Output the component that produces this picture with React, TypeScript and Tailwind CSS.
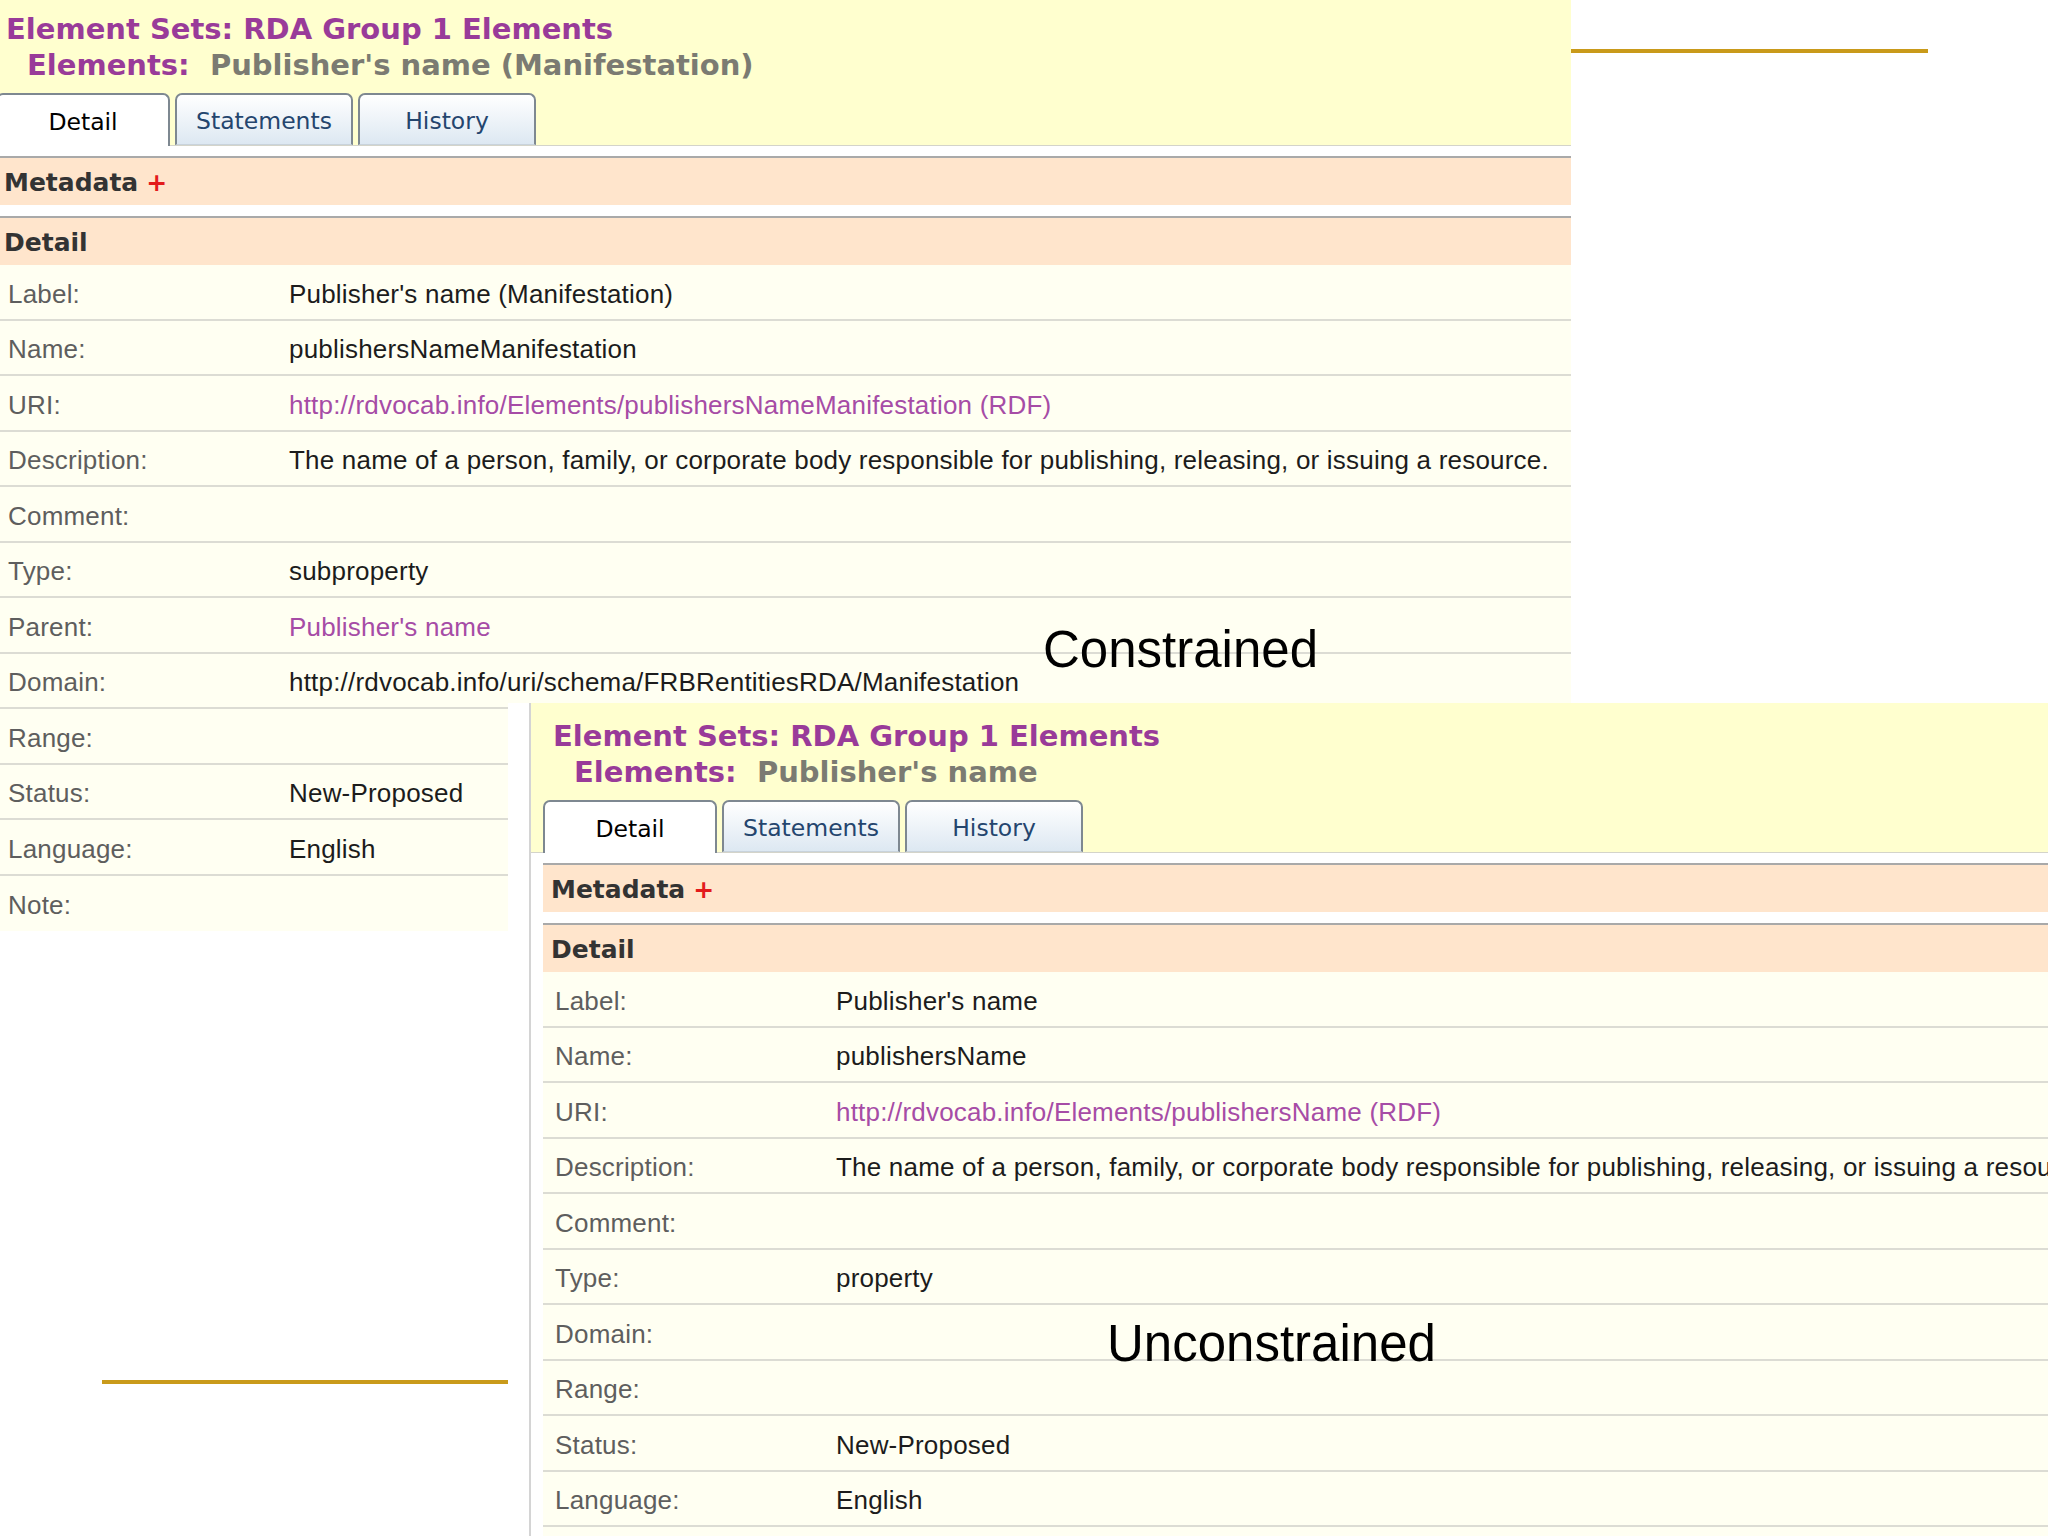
import React from 'react';

type Row = { label: string; value?: string; link?: boolean };

const constrainedRows: Row[] = [
  { label: 'Label:', value: "Publisher's name (Manifestation)" },
  { label: 'Name:', value: 'publishersNameManifestation' },
  { label: 'URI:', value: 'http://rdvocab.info/Elements/publishersNameManifestation (RDF)', link: true },
  { label: 'Description:', value: 'The name of a person, family, or corporate body responsible for publishing, releasing, or issuing a resource.' },
  { label: 'Comment:' },
  { label: 'Type:', value: 'subproperty' },
  { label: 'Parent:', value: "Publisher's name", link: true },
  { label: 'Domain:', value: 'http://rdvocab.info/uri/schema/FRBRentitiesRDA/Manifestation' },
  { label: 'Range:' },
  { label: 'Status:', value: 'New-Proposed' },
  { label: 'Language:', value: 'English' },
  { label: 'Note:' },
];

const unconstrainedRows: Row[] = [
  { label: 'Label:', value: "Publisher's name" },
  { label: 'Name:', value: 'publishersName' },
  { label: 'URI:', value: 'http://rdvocab.info/Elements/publishersName (RDF)', link: true },
  { label: 'Description:', value: 'The name of a person, family, or corporate body responsible for publishing, releasing, or issuing a resource.' },
  { label: 'Comment:' },
  { label: 'Type:', value: 'property' },
  { label: 'Domain:' },
  { label: 'Range:' },
  { label: 'Status:', value: 'New-Proposed' },
  { label: 'Language:', value: 'English' },
  { label: 'Note:' },
];

const Tab = ({ label, active }: { label: string; active?: boolean }) => (
  <div
    className={
      active
        ? 'w-[174px] h-[53px] -mb-px pt-1 flex items-center justify-center rounded-t-[7px] border-2 border-b-0 border-[#7e8891] bg-white text-black'
        : 'h-[52px] w-[178px] pt-1 flex items-center justify-center rounded-t-[7px] border-2 border-b border-[#7e8891] border-b-[#c9d3dc] bg-gradient-to-b from-white to-[#dde8f2] text-[#24456e]'
    }
  >
    {label}
  </div>
);

const Bar = ({ children }: { children: React.ReactNode }) => (
  <div className="h-[49px] pt-[3px] border-t-2 border-[#a9a9a9] bg-[#ffe5cc] flex items-center pl-2 font-['DejaVu_Sans',sans-serif] font-bold text-[25px] text-[#333333]">
    {children}
  </div>
);

const ElementPanel = ({ name, rows, pad }: { name: string; rows: Row[]; pad: string }) => (
  <div className="flex flex-col">
    <div className={`bg-[#ffffcf] border-b border-[#d4d4ca] pt-[15px] ${pad}`}>
      <div className="font-['DejaVu_Sans',sans-serif] font-bold text-[29px] leading-[36px] whitespace-nowrap">
        <div className="pl-[10px] text-[#993b99]">Element Sets: RDA Group 1 Elements</div>
        <div className="pl-[31px] text-[#993b99]">
          Elements:&nbsp; <span className="text-[#7b7b72]">{name}</span>
        </div>
      </div>
      <div className="mt-[10px] flex items-end gap-[5px] font-['DejaVu_Sans',sans-serif] text-[23.5px]">
        <Tab label="Detail" active />
        <Tab label="Statements" />
        <Tab label="History" />
      </div>
    </div>
    <div className={`bg-white pt-[10px] ${pad}`}>
      <Bar>
        Metadata <span className="ml-2 text-[#e31b1b]">+</span>
      </Bar>
      <div className="h-[11px]" />
      <Bar>Detail</Bar>
      <div className="font-['Liberation_Sans',Arial,sans-serif] text-[26px] tracking-[0.2px] whitespace-nowrap">
        {rows.map((r, i) => (
          <div
            key={r.label}
            className={
              i === rows.length - 1
                ? 'h-[55.5px] pt-[5px] flex items-center pl-3 bg-[#fffff2]'
                : 'h-[55.5px] pt-[5px] flex items-center pl-3 bg-[#fffff2] border-b-2 border-[#dcdcd4]'
            }
          >
            <div className="w-[281px] shrink-0 text-[#5e5e5e]">{r.label}</div>
            <div className={r.link ? 'text-[#a64ca6]' : 'text-[#1c1c1c]'}>{r.value}</div>
          </div>
        ))}
      </div>
    </div>
  </div>
);

export default function App() {
  return (
    <div className="relative w-[2048px] h-[1536px] overflow-hidden bg-white">
      <div className="absolute left-[1571px] top-[49px] w-[357px] h-[4px] bg-[#c99a1a]" />
      <div className="absolute left-[102px] top-[1380px] w-[406px] h-[4px] bg-[#c99a1a]" />

      <div className="absolute left-[-4px] top-[-4px] w-[1575px]">
        <ElementPanel name="Publisher's name (Manifestation)" rows={constrainedRows} pad="pl-0" />
      </div>

      <div className="absolute left-[508px] top-[703px] right-0 bottom-0 overflow-hidden bg-white pl-[21px]">
        <div className="h-full border-l-2 border-[#d4d4d4]">
          <ElementPanel name="Publisher's name" rows={unconstrainedRows} pad="pl-3" />
        </div>
      </div>

      <div className="absolute left-[1043px] top-[624px] font-['Liberation_Sans',Arial,sans-serif] text-[51px] leading-none text-black">
        Constrained
      </div>
      <div className="absolute left-[1107px] top-[1318px] font-['Liberation_Sans',Arial,sans-serif] text-[51px] leading-none text-black">
        Unconstrained
      </div>
    </div>
  );
}
